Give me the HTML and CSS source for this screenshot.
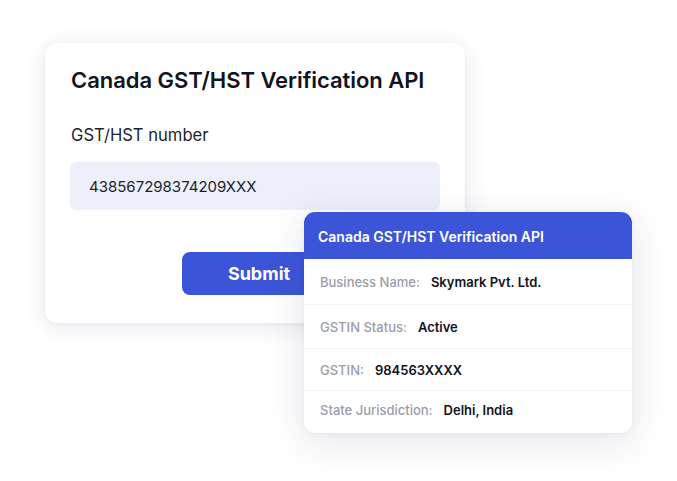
FILE: index.html
```html
<!DOCTYPE html>
<html>
<head>
<meta charset="utf-8">
<link rel="stylesheet" href="styles.css">
</head>
<body>
<div class="stage">
  <div class="form-card">
    <h1 class="form-title">Canada GST/HST Verification API</h1>
    <label class="field-label">GST/HST number</label>
    <div class="field-input">438567298374209XXX</div>
    <div class="actions">
      <button class="submit">Submit</button>
    </div>
  </div>
  <div class="result-card">
    <div class="result-head">Canada GST/HST Verification API</div>
    <div class="result-row r1"><span class="lbl">Business Name:</span><span class="val">Skymark Pvt. Ltd.</span></div>
    <div class="result-row r2"><span class="lbl">GSTIN Status:</span><span class="val">Active</span></div>
    <div class="result-row r3"><span class="lbl">GSTIN:</span><span class="val">984563XXXX</span></div>
    <div class="result-row r4"><span class="lbl">State Jurisdiction:</span><span class="val">Delhi, India</span></div>
  </div>
</div>
</body>
</html>
```
FILE: styles.css
```css
* { box-sizing: border-box; }
html, body { margin: 0; padding: 0; background: #ffffff; }
body { font-family: Inter, "Noto Sans", sans-serif; color: #111322; }
.stage { position: relative; width: 677px; height: 481px; padding: 43px 0 0 45px; }
.form-card {
  width: 420px; height: 280px; background: #fff; border-radius: 12px;
  box-shadow: 0 4px 24px rgba(30, 40, 80, 0.10), 0 1px 4px rgba(30,40,80,0.04);
  padding: 23px 25px 0 26px;
}
.form-title { margin: 0; font-size: 22px; font-weight: 600; line-height: 29px; letter-spacing: -0.05px; color: #111322; }
.field-label { display: block; margin-top: 29px; font-size: 16.6px; line-height: 22px; font-weight: 400; color: #1d1f2a; }
.field-input {
  margin-top: 16px; margin-left: -1px; height: 48px; width: 370px; background: #edeffb; border-radius: 6px;
  padding: 0 19px; display: flex; align-items: center; font-size: 15px; color: #1d1f2a;
}
.actions { padding-left: 111px; margin-top: 42px; }
.submit {
  width: 154px; height: 43px; border: 0; border-radius: 8px; background: #3c55d8; color: #fff;
  font-family: Inter, "Noto Sans", sans-serif; font-size: 18px; font-weight: 700; padding: 0;
}
.result-card {
  position: absolute; left: 304px; top: 212px; width: 328px; height: 221px;
  background: #fff; border-radius: 11px; overflow: hidden;
  box-shadow: 0 8px 40px rgba(30, 40, 80, 0.12), 0 1px 6px rgba(30,40,80,0.05);
}
.result-head {
  height: 47px; background: #3c55d8; color: #fff; font-size: 14px; font-weight: 600;
  display: flex; align-items: center; padding-left: 14px; padding-top: 2px;
}
.result-row { display: flex; align-items: center; padding-left: 16px; font-size: 13px; border-bottom: 1px solid #f3f4f7; }
.result-row.r1 { height: 46px; }
.result-row.r2 { height: 44px; }
.result-row.r3 { height: 42px; }
.result-row.r4 { height: 38px; border-bottom: 0; }
.lbl { color: #9a9da7; font-weight: 500; margin-right: 11px; }
.val { color: #111322; font-weight: 600; }
```
